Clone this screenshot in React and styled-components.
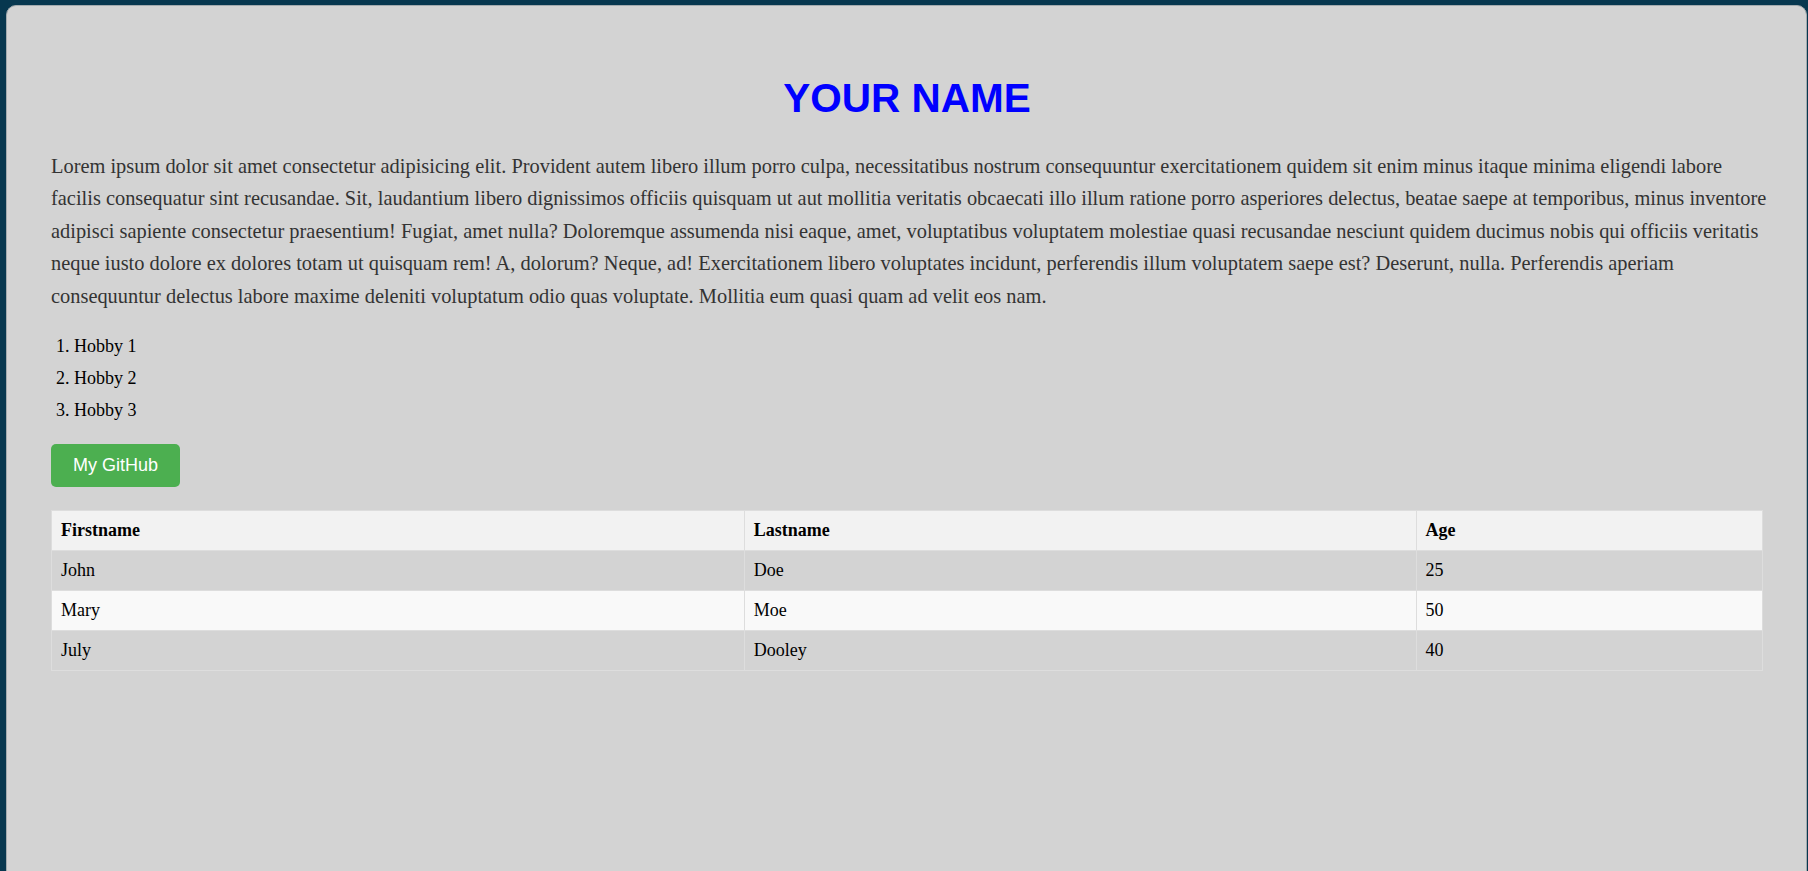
import React from 'react';
import styled, { createGlobalStyle } from 'styled-components';

const GlobalStyle = createGlobalStyle`
	html, body {
		margin: 0;
		padding: 0;
		background-color: #07374f;
		font-family: "Liberation Serif", "Times New Roman", serif;
	}
	#root {
		padding: 5px 1px 0 6px;
	}
`;

const Card = styled.main`
	min-height: 900px;
	background-color: #d3d3d3;
	border: 1px solid #a3aaae;
	border-radius: 10px;
	padding: 69px 43px 40px 44px;
`;

const Title = styled.h1`
	margin: 0;
	text-align: center;
	font-family: "Liberation Sans", Arial, sans-serif;
	font-size: 40.5px;
	line-height: 47px;
	font-weight: 700;
	color: #0000ff;
`;

const Text = styled.p`
	margin: 28px 0 0;
	font-size: 20.4px;
	line-height: 32.4px;
	color: #333;
`;

const Line = styled.span`
	display: block;
	white-space: nowrap;
`;

const List = styled.ol`
	margin: 18px 0 0;
	padding-left: 5px;
	list-style-position: inside;
	font-size: 18px;
	line-height: 32px;
	color: #000;
`;

const Button = styled.a`
	display: inline-block;
	margin-top: 18px;
	padding: 11px 22px;
	border-radius: 5px;
	background-color: #4caf50;
	color: #fff;
	font-family: "Liberation Sans", Arial, sans-serif;
	font-size: 18px;
	line-height: 21px;
	text-decoration: none;
`;

const Table = styled.table`
	margin-top: 23px;
	width: 100%;
	border-collapse: collapse;
	font-size: 18px;
	color: #000;
`;

const Row = styled.tr`
	background-color: ${({ $shade }) => $shade};
`;

const Cell = styled.td`
	border: 1px solid #ddd;
	padding: 10px 9px;
	line-height: 19px;
	text-align: left;
	font-weight: ${({ $head }) => ($head ? 700 : 400)};
`;

const lines = [
	'Lorem ipsum dolor sit amet consectetur adipisicing elit. Provident autem libero illum porro culpa, necessitatibus nostrum consequuntur exercitationem quidem sit enim minus itaque minima eligendi labore',
	'facilis consequatur sint recusandae. Sit, laudantium libero dignissimos officiis quisquam ut aut mollitia veritatis obcaecati illo illum ratione porro asperiores delectus, beatae saepe at temporibus, minus inventore',
	'adipisci sapiente consectetur praesentium! Fugiat, amet nulla? Doloremque assumenda nisi eaque, amet, voluptatibus voluptatem molestiae quasi recusandae nesciunt quidem ducimus nobis qui officiis veritatis',
	'neque iusto dolore ex dolores totam ut quisquam rem! A, dolorum? Neque, ad! Exercitationem libero voluptates incidunt, perferendis illum voluptatem saepe est? Deserunt, nulla. Perferendis aperiam',
	'consequuntur delectus labore maxime deleniti voluptatum odio quas voluptate. Mollitia eum quasi quam ad velit eos nam.',
];

const people = [
	['John', 'Doe', '25'],
	['Mary', 'Moe', '50'],
	['July', 'Dooley', '40'],
];

export default function App() {
	return (
		<>
			<GlobalStyle />
			<Card>
				<Title>YOUR NAME</Title>
				<Text>
					{lines.map((l) => <Line key={l}>{l}</Line>)}
				</Text>
				<List>
					<li>Hobby 1</li>
					<li>Hobby 2</li>
					<li>Hobby 3</li>
				</List>
				<Button href="#">My GitHub</Button>
				<Table>
					<thead>
						<Row $shade="#f2f2f2">
							<Cell as="th" $head>Firstname</Cell>
							<Cell as="th" $head>Lastname</Cell>
							<Cell as="th" $head>Age</Cell>
						</Row>
					</thead>
					<tbody>
						{people.map((p, i) => (
							<Row key={p[0]} $shade={i % 2 ? '#f9f9f9' : '#d3d3d3'}>
								{p.map((v) => <Cell key={v}>{v}</Cell>)}
							</Row>
						))}
					</tbody>
				</Table>
			</Card>
		</>
	);
}
